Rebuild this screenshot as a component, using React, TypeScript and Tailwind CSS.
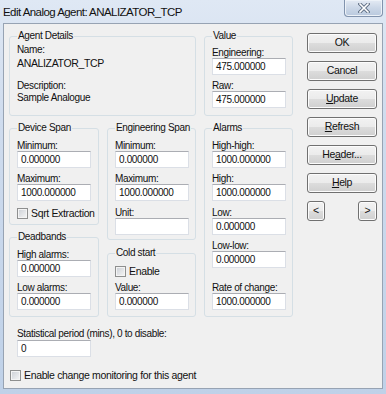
import React from "react";

const font = "font-['Liberation_Sans',Arial,sans-serif] text-[10px] tracking-[-0.35px] text-[#111]";

function Group({ title, className, children }: { title: string; className?: string; children?: React.ReactNode }) {
  return (
    <fieldset className={`border border-[#d5dfe5] rounded-[3px] px-[7px] min-w-0 ${className ?? ""}`}>
      <legend className="px-[1px] leading-[12px] whitespace-nowrap">{title}</legend>
      {children}
    </fieldset>
  );
}

function Label({ children, className }: { children: React.ReactNode; className?: string }) {
  return <div className={`leading-[11px] h-[11px] whitespace-nowrap ${className ?? ""}`}>{children}</div>;
}

function Input({ value, className }: { value?: string; className?: string }) {
  return (
    <div
      className={`w-[74px] h-[17px] shrink-0 bg-white border border-[#dbdfe6] border-t-[#abadb3] pl-[3px] leading-[15px] whitespace-nowrap ${className ?? ""}`}
    >
      {value}
    </div>
  );
}

function Check({ label, className }: { label: string; className?: string }) {
  return (
    <div className={`flex items-center gap-[3px] h-[11px] ${className ?? ""}`}>
      <div className="w-[11px] h-[11px] shrink-0 border border-[#8e8f8f] bg-[linear-gradient(135deg,#cbcfd5,#f6f6f6)] shadow-[inset_0_0_0_1px_#f4f4f4]" />
      <span className="leading-[11px] whitespace-nowrap text-[10.5px]">{label}</span>
    </div>
  );
}

function Button({ children, className }: { children: React.ReactNode; className?: string }) {
  return (
    <div
      className={`h-[20px] flex items-center justify-center border border-[#707070] rounded-[3px] bg-[linear-gradient(#f2f2f2,#ebebeb_50%,#dddddd_50%,#cfcfcf)] shadow-[inset_0_0_0_1px_#fcfcfc] text-[10.5px] ${className ?? ""}`}
    >
      {children}
    </div>
  );
}

export default function App() {
  return (
    <div className={`w-[386px] h-[394px] flex flex-col bg-[linear-gradient(#dfe8f4,#cfdcee_30%,#bfd1e8)] ${font}`}>
      <div className="h-[23px] flex items-start justify-between pl-[3px] pr-[3px]">
        <div className="pt-[5px] text-[11.5px] tracking-[-0.55px] leading-[14px]">Edit Analog Agent: ANALIZATOR_TCP</div>
        <div className="w-[39px] h-[17px] border border-t-0 border-[#8193ad] rounded-b-[4px] bg-[linear-gradient(#e4ebf4,#cbd7e7_50%,#b9c9de)] shadow-[inset_0_0_0_1px_#edf2f8] flex items-center justify-center">
          <svg width="12" height="10" viewBox="0 0 12 10">
            <path d="M2 1 L10 9 M10 1 L2 9" stroke="#5f6f85" strokeWidth="3.4" strokeLinecap="square" />
            <path d="M2 1 L10 9 M10 1 L2 9" stroke="#ffffff" strokeWidth="1.6" strokeLinecap="square" />
          </svg>
        </div>
      </div>
      <div className="mx-[3px] w-[380px] h-[366px] border border-[#97a3b3] bg-[#f0f0f0] flex pl-[5px] pt-[6px]">
        <div className="w-[284px] flex flex-col">
          <div className="flex gap-[8px]">
            <Group title="Agent Details" className="w-[187px] h-[86px]">
              <div className="mt-[2px] leading-[12px]">Name:</div>
              <div className="mt-[1px] leading-[12px] text-[10.5px]">ANALIZATOR_TCP</div>
              <div className="mt-[11px] leading-[12px]">Description:</div>
              <div className="leading-[12px]">Sample Analogue</div>
            </Group>
            <Group title="Value" className="w-[89px] h-[86px]">
              <Label className="mt-[5px]">Engineering:</Label>
              <Input value="475.000000" />
              <Label className="mt-[5px]">Raw:</Label>
              <Input value="475.000000" />
            </Group>
          </div>
          <div className="flex gap-[8px] mt-[6px]">
            <div className="w-[90px] flex flex-col gap-[6px]">
              <Group title="Device Span" className="h-[103px]">
                <Label className="mt-[6px]">Minimum:</Label>
                <Input value="0.000000" />
                <Label className="mt-[5px]">Maximum:</Label>
                <Input value="1000.000000" />
                <Check label="Sqrt Extraction" className="mt-[7px]" />
              </Group>
              <Group title="Deadbands" className="h-[86px]">
                <Label className="mt-[6px]">High alarms:</Label>
                <Input value="0.000000" />
                <Label className="mt-[5px]">Low alarms:</Label>
                <Input value="0.000000" />
              </Group>
            </div>
            <div className="w-[89px] flex flex-col gap-[7px]">
              <Group title="Engineering Span" className="h-[118px]">
                <Label className="mt-[6px]">Minimum:</Label>
                <Input value="0.000000" />
                <Label className="mt-[5px]">Maximum:</Label>
                <Input value="1000.000000" />
                <Label className="mt-[6px]">Unit:</Label>
                <Input />
              </Group>
              <Group title="Cold start" className="h-[70px]">
                <Check label="Enable" className="mt-[7px]" />
                <Label className="mt-[5px]">Value:</Label>
                <Input value="0.000000" />
              </Group>
            </div>
            <Group title="Alarms" className="w-[89px] h-[195px]">
              <Label className="mt-[6px]">High-high:</Label>
              <Input value="1000.000000" />
              <Label className="mt-[5px]">High:</Label>
              <Input value="1000.000000" />
              <Label className="mt-[6px]">Low:</Label>
              <Input value="0.000000" />
              <Label className="mt-[5px]">Low-low:</Label>
              <Input value="0.000000" />
              <Label className="mt-[14px]">Rate of change:</Label>
              <Input value="1000.000000" />
            </Group>
          </div>
          <Label className="mt-[11px] ml-[8px]">Statistical period (mins), 0 to disable:</Label>
          <Input value="0" className="ml-[8px] mt-[1px]" />
          <Check label="Enable change monitoring for this agent" className="mt-[13px] ml-[1px]" />
        </div>
        <div className="ml-[14px] mt-[3px] w-[70px] flex flex-col gap-[8px]">
          <Button>OK</Button>
          <Button>Cancel</Button>
          <Button>
            <span className="underline">U</span>pdate
          </Button>
          <Button>
            <span className="underline">R</span>efresh
          </Button>
          <Button>
            He<span className="underline">a</span>der...
          </Button>
          <Button>
            <span className="underline">H</span>elp
          </Button>
          <div className="flex justify-between">
            <Button className="w-[18px] h-[17px]">&lt;</Button>
            <Button className="w-[19px] h-[17px]">&gt;</Button>
          </div>
        </div>
      </div>
    </div>
  );
}
